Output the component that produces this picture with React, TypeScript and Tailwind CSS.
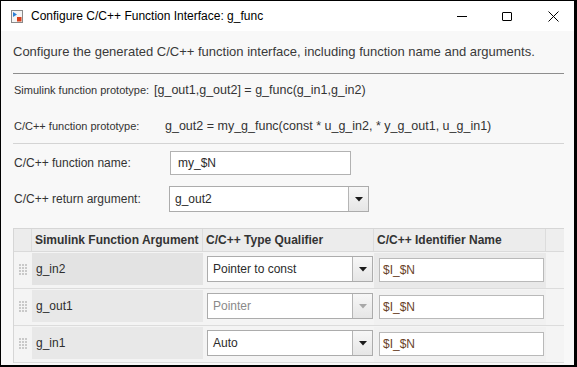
import React from 'react';

const Arrow: React.FC<{ disabled?: boolean }> = ({ disabled }) => (
  <svg width="8" height="5" viewBox="0 0 8 5">
    <path d="M0 0 H8 L4 4.5 Z" fill={disabled ? '#a8a8a8' : '#1a1a1a'} />
  </svg>
);

const Select: React.FC<{ value: string; className: string; disabled?: boolean }> = ({ value, className, disabled }) => (
  <div className={`flex border border-[#acacac] bg-white ${className}`}>
    <div className={`flex-1 flex items-center pl-[5px] ${disabled ? 'text-[#8a8a8a]' : 'text-[#2b2b2b]'}`}>{value}</div>
    <div className="w-[20px] border-l border-[#b5b5b5] bg-gradient-to-b from-[#f7f7f7] to-[#e6e6e6] flex items-center justify-center">
      <Arrow disabled={disabled} />
    </div>
  </div>
);

const Grip: React.FC = () => (
  <div className="grid grid-cols-3 gap-[1px]">
    {Array.from({ length: 12 }).map((_, i) => (
      <div key={i} className="w-[2px] h-[2px] bg-[#c9c9c9]" />
    ))}
  </div>
);

const rows = [
  { arg: 'g_in2', type: 'Pointer to const', selected: true },
  { arg: 'g_out1', type: 'Pointer', disabled: true },
  { arg: 'g_in1', type: 'Auto' },
];

const App: React.FC = () => {
  return (
    <div className="w-[577px] h-[367px] flex flex-col overflow-hidden bg-[#f8f8f8] border-black border-t border-l border-r-[3px] border-b-2 text-[12px] text-[#333]" style={{ fontFamily: '"Liberation Sans", Arial, sans-serif' }}>
      {/* title bar */}
      <div className="h-[30px] shrink-0 bg-white flex items-center text-black">
        <svg className="ml-[10px]" width="12" height="13" viewBox="0 0 12 13">
          <rect x="0.5" y="0.5" width="11" height="12" fill="#f4f4f4" stroke="#8a8a8a" />
          <path d="M2 2 L6 4.5 L2 7 Z" fill="#2a7fd4" />
          <rect x="6" y="7" width="4.5" height="4.5" fill="#d8401c" />
        </svg>
        <span className="ml-[8px] text-[12px]">Configure C/C++ Function Interface: g_func</span>
        <div className="ml-auto flex items-center">
          <div className="w-[10px] h-px bg-black mr-[35px]" />
          <div className="w-[10px] h-[9px] border border-black rounded-[1px] mr-[36px]" />
          <svg className="mr-[15px]" width="11" height="11" viewBox="0 0 11 11">
            <path d="M0.5 0.5 L10.5 10.5 M10.5 0.5 L0.5 10.5" stroke="#000" strokeWidth="1" />
          </svg>
        </div>
      </div>

      <div className="pl-[12px] pr-[9px] flex flex-col">
        <div className="mt-[13px] leading-[15px] text-[13px] text-[#3a3a3a] whitespace-nowrap">
          Configure the generated C/C++ function interface, including function name and arguments.
        </div>
        <div className="mt-[14px] h-px bg-[#8e8e8e] w-[551px]" />

        <div className="mt-[9px] flex items-baseline leading-[15px] pl-[1px] whitespace-nowrap">
          <span className="w-[140px] shrink-0 text-[11px]">Simulink function prototype:</span>
          <span className="text-[12.5px]">[g_out1,g_out2] = g_func(g_in1,g_in2)</span>
        </div>
        <div className="mt-[21px] flex items-baseline leading-[15px] pl-[1px] whitespace-nowrap">
          <span className="w-[151px] shrink-0 text-[11px]">C/C++ function prototype:</span>
          <span className="text-[12.5px]">g_out2 = my_g_func(const * u_g_in2, * y_g_out1, u_g_in1)</span>
        </div>
        <div className="mt-[9px] h-px bg-[#d4d4d4] w-[551px]" />

        <div className="mt-[7px] flex items-center pl-[1px]">
          <span className="w-[156px]">C/C++ function name:</span>
          <div className="w-[181px] h-[24px] border border-[#b2b2b2] bg-white flex items-center pl-[7px] text-[#2b2b2b]">my_$N</div>
        </div>
        <div className="mt-[11px] flex items-center pl-[1px]">
          <span className="w-[155px]">C/C++ return argument:</span>
          <Select value="g_out2" className="w-[200px] h-[26px]" />
        </div>

        {/* arguments table */}
        <div className="mt-[16px] w-[551px] border-t border-l border-[#d6d6d6] bg-[#f4f4f4] flex flex-col">
          <div className="h-[23px] flex bg-[#ececec] border-b border-[#dadada] font-bold text-[#333]">
            <div className="w-[18px] border-r border-[#dcdcdc]" />
            <div className="w-[171px] border-r border-[#dcdcdc] flex items-center pl-[3px]">Simulink Function Argument</div>
            <div className="w-[171px] border-r border-[#dcdcdc] flex items-center pl-[3px]">C/C++ Type Qualifier</div>
            <div className="w-[172px] border-r border-[#dcdcdc] flex items-center pl-[3px]">C/C++ Identifier Name</div>
            <div className="flex-1 bg-[#eeeeee]" />
          </div>
          {rows.map((r) => (
            <div key={r.arg} className="h-[37px] flex border-b border-[#dcdcdc]">
              <div className="w-[18px] h-[32px] mt-px flex items-center justify-center">
                <Grip />
              </div>
              <div className={`w-[171px] h-[32px] mt-px flex items-center pl-[4px] text-[#2e2e2e] ${r.selected ? 'bg-[#e3e3e3]' : 'bg-[#e8e8e8]'}`}>{r.arg}</div>
              <div className="w-[171px] flex items-start pl-[4px] pt-[4px]">
                <Select value={r.type} disabled={r.disabled} className="w-[166px] h-[26px]" />
              </div>
              <div className={`w-[172px] h-[35px] mt-px flex items-start pl-[5px] pt-[5px] ${r.selected ? 'bg-[#e9e9e9]' : 'bg-[#f1f1f1]'}`}>
                <div className="w-[165px] h-[24px] border border-[#b9b9b9] bg-white flex items-center pl-[3px] text-[#6a4228]">$I_$N</div>
              </div>
              <div className="flex-1" />
            </div>
          ))}
        </div>
      </div>
    </div>
  );
};

export default App;
